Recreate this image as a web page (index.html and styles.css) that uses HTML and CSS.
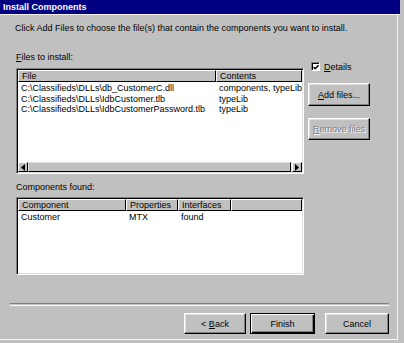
FILE: index.html
```html
<!DOCTYPE html>
<html lang="en">
<head>
    <meta charset="UTF-8">
    <title>Install Components</title>
    <link rel="stylesheet" href="styles.css">
</head>
<body>
    <div class="window">
        <div class="titlebar">Install Components</div>
        <div class="content">
            <p class="intro">Click Add Files to choose the file(s) that contain the components you want to install.</p>
            <div class="main">
                <div class="left">
                    <div class="label"><u>F</u>iles to install:</div>
                    <div class="listview files">
                        <div class="lv-head">
                            <div class="hcell c-file">File</div>
                            <div class="hcell c-contents">Contents</div>
                        </div>
                        <div class="lv-body">
                            <div class="lv-row"><span class="c-file">C:\Classifieds\DLLs\db_CustomerC.dll</span><span class="c-contents">components, typeLib</span></div>
                            <div class="lv-row"><span class="c-file">C:\Classifieds\DLLs\IdbCustomer.tlb</span><span class="c-contents">typeLib</span></div>
                            <div class="lv-row"><span class="c-file">C:\Classifieds\DLLs\IdbCustomerPassword.tlb</span><span class="c-contents">typeLib</span></div>
                        </div>
                        <div class="hscroll">
                            <div class="sb-btn"><svg width="4" height="7" viewBox="0 0 4 7"><path d="M4 0 L0 3.5 L4 7 Z" fill="#000"/></svg></div>
                            <div class="sb-thumb"></div>
                            <div class="sb-btn"><svg width="4" height="7" viewBox="0 0 4 7"><path d="M0 0 L4 3.5 L0 7 Z" fill="#000"/></svg></div>
                        </div>
                    </div>
                    <div class="label found">Components found:</div>
                    <div class="listview comps">
                        <div class="lv-head">
                            <div class="hcell c-comp">Component</div>
                            <div class="hcell c-props">Properties</div>
                            <div class="hcell c-ifaces">Interfaces</div>
                            <div class="hcell c-rest"></div>
                        </div>
                        <div class="lv-body">
                            <div class="lv-row"><span class="c-comp">Customer</span><span class="c-props">MTX</span><span class="c-ifaces">found</span></div>
                        </div>
                    </div>
                </div>
                <div class="right">
                    <label class="check">
                        <span class="box"><svg width="7" height="7" viewBox="0 0 7 7"><path d="M0.5 3 L2.5 5 L6.5 1" stroke="#000" stroke-width="1.6" fill="none"/></svg></span>
                        <span><u>D</u>etails</span>
                    </label>
                    <button class="btn side"><u>A</u>dd files...</button>
                    <button class="btn side disabled"><u>R</u>emove files</button>
                </div>
            </div>
            <div class="separator"></div>
            <div class="buttons">
                <button class="btn back">&lt; <u>B</u>ack</button>
                <button class="btn finish default">Finish</button>
                <button class="btn cancel">Cancel</button>
            </div>
        </div>
    </div>
</body>
</html>
```

FILE: styles.css
```css
body {
    margin: 0;
    padding: 0;
    background: #c0c0c0;
}
.window {
    width: 404px;
    height: 343px;
    box-sizing: border-box;
    background: #c0c0c0;
    border-right: 3px solid #c0c0c0;
    box-shadow: inset -3px -3px #c0c0c0, inset -4px -4px #f4f4f4;
    font-family: "Liberation Sans", Arial, sans-serif;
    font-size: 9px;
    color: #000;
}
.titlebar {
    height: 14px;
    line-height: 14px;
    margin-right: 1px;
    padding-left: 3px;
    background: #000080;
    color: #fff;
    font-weight: bold;
    border-bottom: 1px solid #f2f2e6;
}
.content {
    padding: 8px 12px 0 16px;
}
.intro {
    margin: 0;
    line-height: 11px;
    padding-left: 0;
    margin-left: -1px;
}
.main {
    display: flex;
    gap: 4px;
    margin-top: 18px;
}
.left {
    width: 288px;
}
.label {
    line-height: 11px;
    margin-bottom: 5px;
}
.label.found {
    margin-top: 8px;
    margin-bottom: 4px;
}
.listview {
    box-sizing: border-box;
    background: #fff;
    border-top: 1px solid #808080;
    border-left: 1px solid #808080;
    border-bottom: 1px solid #fff;
    border-right: 1px solid #fff;
    box-shadow: inset 1px 1px #000, inset -1px -1px #dfdfdf;
    padding: 1px;
    display: flex;
    flex-direction: column;
    overflow: hidden;
}
.files {
    height: 106px;
}
.comps {
    height: 78px;
}
.lv-head {
    display: flex;
    height: 12px;
    flex-shrink: 0;
}
.hcell {
    box-sizing: border-box;
    height: 12px;
    line-height: 11px;
    padding-left: 3px;
    background: #c0c0c0;
    border-top: 1px solid #fff;
    border-left: 1px solid #fff;
    border-right: 1px solid #000;
    border-bottom: 1px solid #000;
    white-space: nowrap;
}
.lv-body {
    flex: 1;
    padding-top: 1px;
}
.lv-row {
    display: flex;
    line-height: 10.5px;
    white-space: nowrap;
}
.lv-row span {
    box-sizing: border-box;
    padding-left: 3px;
    overflow: hidden;
}
.c-file {
    width: 198px;
    flex-shrink: 0;
}
.c-contents {
    flex: 1;
}
.c-comp {
    width: 108px;
    flex-shrink: 0;
}
.c-props {
    width: 52px;
    flex-shrink: 0;
}
.c-ifaces {
    width: 53px;
    flex-shrink: 0;
}
.c-rest {
    flex: 1;
}
.hscroll {
    display: flex;
    height: 10px;
    flex-shrink: 0;
    background: #e0e0e0;
}
.sb-btn {
    box-sizing: border-box;
    width: 10px;
    height: 10px;
    background: #c0c0c0;
    border-top: 1px solid #fff;
    border-left: 1px solid #fff;
    border-right: 1px solid #000;
    border-bottom: 1px solid #000;
    display: flex;
    align-items: center;
    justify-content: center;
}
.sb-thumb {
    flex: 1;
    box-sizing: border-box;
    background: #c0c0c0;
    border-top: 1px solid #dfdfdf;
    border-left: 1px solid #dfdfdf;
    border-right: 1px solid #000;
    border-bottom: 1px solid #000;
    margin-right: 1px;
}
.right {
    width: 62px;
    padding-top: 10px;
    display: flex;
    flex-direction: column;
}
.check {
    display: flex;
    align-items: center;
    gap: 4px;
    height: 9px;
    margin-left: 3px;
}
.box {
    box-sizing: border-box;
    width: 9px;
    height: 9px;
    background: #fff;
    border-top: 1px solid #808080;
    border-left: 1px solid #808080;
    border-bottom: 1px solid #fff;
    border-right: 1px solid #fff;
    box-shadow: inset 1px 1px #000;
    display: flex;
    align-items: center;
    justify-content: center;
    padding: 1px 0 0 1px;
}
.btn {
    box-sizing: border-box;
    margin: 0;
    padding: 0;
    height: 21px;
    background: #c0c0c0;
    border: 1px solid;
    border-color: #fff #000 #000 #fff;
    box-shadow: inset -1px -1px #808080, inset 1px 1px #dfdfdf;
    font-family: inherit;
    font-size: 9px;
    color: #000;
    text-align: center;
}
.btn.side {
    width: 62px;
    margin-top: 12px;
    height: 23px;
}
.btn.side.disabled {
    height: 22px;
}
.btn.disabled {
    color: #808080;
    text-shadow: 1px 1px #fff;
}
.btn.default {
    border-color: #000;
    box-shadow: inset 1px 1px #fff, inset -1px -1px #000, inset -2px -2px #808080;
}
.separator {
    margin: 28px 0 0 -6px;
    height: 1px;
    border-top: 1px solid #808080;
    border-bottom: 1px solid #fff;
}
.buttons {
    display: flex;
    justify-content: flex-end;
    margin-top: 7px;
}
.back {
    width: 62px;
}
.finish {
    width: 65px;
    margin-left: 4px;
}
.cancel {
    width: 64px;
    margin-left: 10px;
}
```
